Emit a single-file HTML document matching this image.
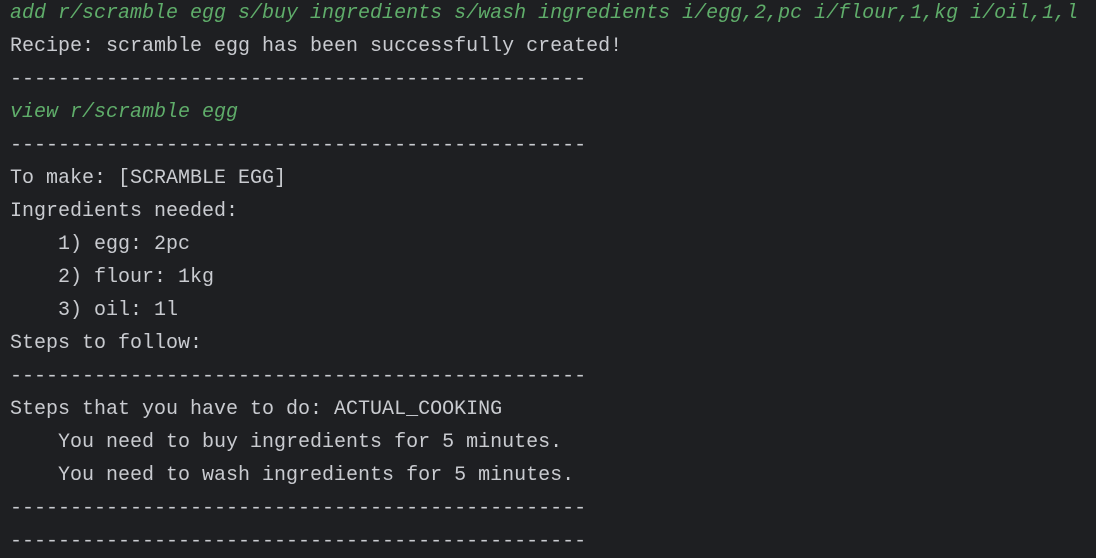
<!DOCTYPE html>
<html><head><style>
html,body{margin:0;padding:0;background:#1e1f22;width:1096px;height:554px;overflow:hidden}
pre{margin:0;position:absolute;left:10px;top:-3px;font-family:"Liberation Mono",monospace;font-size:20px;line-height:33px;color:#c9cbd0}
.g{color:#5fad6a;font-style:italic}
</style></head><body>
<pre><span class="g">add r/scramble egg s/buy ingredients s/wash ingredients i/egg,2,pc i/flour,1,kg i/oil,1,l</span>
Recipe: scramble egg has been successfully created!
------------------------------------------------
<span class="g">view r/scramble egg</span>
------------------------------------------------
To make: [SCRAMBLE EGG]
Ingredients needed:
    1) egg: 2pc
    2) flour: 1kg
    3) oil: 1l
Steps to follow:
------------------------------------------------
Steps that you have to do: ACTUAL_COOKING
    You need to buy ingredients for 5 minutes.
    You need to wash ingredients for 5 minutes.
------------------------------------------------
------------------------------------------------</pre>
</body></html>
